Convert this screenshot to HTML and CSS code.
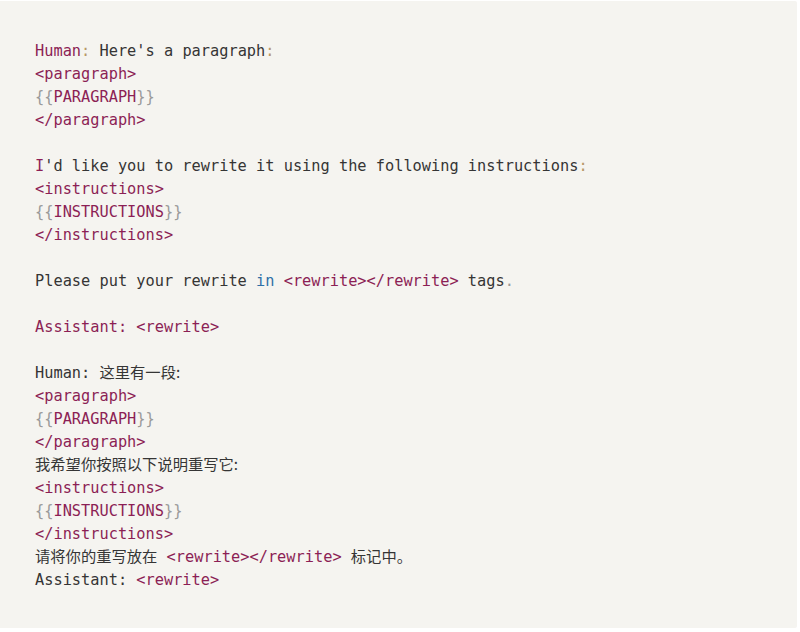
FILE: index.html
```html
<!DOCTYPE html>
<html lang="en">
<head>
<meta charset="utf-8">
<link rel="stylesheet" href="styles.css">
</head>
<body>
<div class="panel">
<div class="code">
<div class="ln"><span class="k">Human</span><span class="p">:</span> Here's a paragraph<span class="p">:</span></div>
<div class="ln"><span class="t">&lt;paragraph&gt;</span></div>
<div class="ln"><span class="g">{{</span><span class="t">PARAGRAPH</span><span class="g">}}</span></div>
<div class="ln"><span class="t">&lt;/paragraph&gt;</span></div>
<div class="ln"></div>
<div class="ln"><span class="k">I</span>'d like you to rewrite it using the following instructions<span class="p">:</span></div>
<div class="ln"><span class="t">&lt;instructions&gt;</span></div>
<div class="ln"><span class="g">{{</span><span class="t">INSTRUCTIONS</span><span class="g">}}</span></div>
<div class="ln"><span class="t">&lt;/instructions&gt;</span></div>
<div class="ln"></div>
<div class="ln">Please put your rewrite <span class="b">in</span> <span class="t">&lt;rewrite&gt;&lt;/rewrite&gt;</span> tags<span class="g">.</span></div>
<div class="ln"></div>
<div class="ln"><span class="k">Assistant: &lt;rewrite&gt;</span></div>
<div class="ln"></div>
<div class="ln">Human: <span class="cjk">这里有一段:</span></div>
<div class="ln"><span class="t">&lt;paragraph&gt;</span></div>
<div class="ln"><span class="g">{{</span><span class="t">PARAGRAPH</span><span class="g">}}</span></div>
<div class="ln"><span class="t">&lt;/paragraph&gt;</span></div>
<div class="ln"><span class="cjk">我希望你按照以下说明重写它:</span></div>
<div class="ln"><span class="t">&lt;instructions&gt;</span></div>
<div class="ln"><span class="g">{{</span><span class="t">INSTRUCTIONS</span><span class="g">}}</span></div>
<div class="ln"><span class="t">&lt;/instructions&gt;</span></div>
<div class="ln"><span class="cjk">请将你的重写放在</span> <span class="t">&lt;rewrite&gt;&lt;/rewrite&gt;</span> <span class="cjk">标记中。</span></div>
<div class="ln">Assistant: <span class="t">&lt;rewrite&gt;</span></div>
</div>
</div>
</body>
</html>
```

FILE: styles.css
```css
html, body {
  margin: 0;
  padding: 0;
  background: #ffffff;
}

.panel {
  margin-top: 1px;
  width: 797px;
  height: 627px;
  box-sizing: border-box;
  padding: 39px 35px 0 35px;
  background: #f5f4f0;
  border-radius: 0 2px 2px 0;
}

.code {
  display: flex;
  flex-direction: column;
  font-family: "DejaVu Sans Mono", "Noto Sans CJK SC", monospace;
  font-size: 15.3px;
  line-height: 23px;
  color: #353535;
}

.ln {
  height: 23px;
  white-space: pre;
}

.k { color: #8c1f55; }
.t { color: #8c1f55; }
.p { color: #b89868; }
.g { color: #9a9a9a; }
.b { color: #2e6fa7; }
.cjk {
  font-family: "Noto Sans CJK SC", sans-serif;
  line-height: 0;
}
```
